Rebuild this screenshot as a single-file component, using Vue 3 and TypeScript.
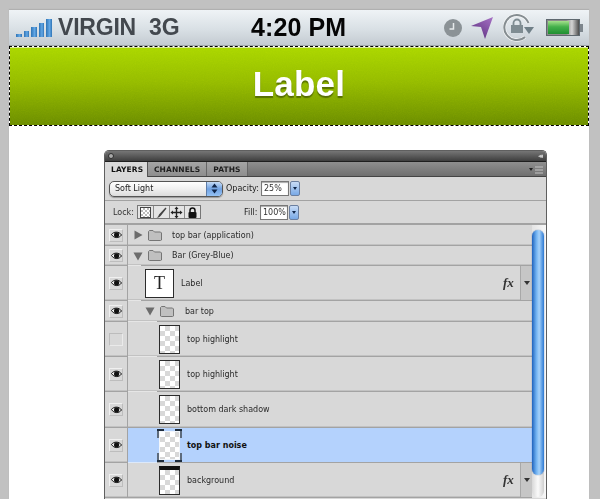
<script setup lang="ts">
interface LayerRow {
  name: string
  kind: 'group' | 'text' | 'layer' | 'fill'
  height: number
  indent?: number
  open?: boolean
  eye?: boolean
  fx?: boolean
  active?: boolean
  soft?: number
}

const rows: LayerRow[] = [
  { name: 'top bar (application)', kind: 'group', height: 21, indent: 5, eye: true },
  { name: 'Bar (Grey-Blue)', kind: 'group', height: 20, indent: 5, open: true, eye: true, soft: 13 },
  { name: 'Label', kind: 'text', height: 35, eye: true, fx: true, soft: 13 },
  { name: 'bar top', kind: 'group', height: 21, indent: 17, open: true, eye: true, soft: 29 },
  { name: 'top highlight', kind: 'layer', height: 35, soft: 29 },
  { name: 'top highlight', kind: 'layer', height: 35, eye: true, soft: 29 },
  { name: 'bottom dark shadow', kind: 'layer', height: 36, eye: true },
  { name: 'top bar noise', kind: 'layer', height: 35, eye: true, active: true, soft: 29 },
  { name: 'background', kind: 'fill', height: 35, eye: true, fx: true },
]

const signalBars = [3, 6, 10, 14, 18]
</script>

<template>
  <div class="page">
    <div class="canvas">
      <header class="status">
        <div class="signal">
          <span v-for="h in signalBars" :key="h" class="signal-bar" :style="{ height: h + 'px' }"></span>
        </div>
        <span class="carrier">VIRGIN</span>
        <span class="network">3G</span>
        <span class="time">4:20 PM</span>
        <svg class="ico-clock" width="20" height="20" viewBox="0 0 20 20">
          <circle cx="10" cy="10" r="9" fill="#8b9296" />
          <path d="M10.5 5v6H6.5" fill="none" stroke="#e6eaec" stroke-width="1.5" />
        </svg>
        <svg class="ico-arrow" width="23" height="24" viewBox="0 0 23 24">
          <defs>
            <linearGradient id="arrowFill" x1="1" y1="0" x2="0.3" y2="1">
              <stop offset="0" stop-color="#a873c6" />
              <stop offset="1" stop-color="#5f3382" />
            </linearGradient>
          </defs>
          <path d="M22 1 0 10 10 11 14 23Z" fill="url(#arrowFill)" />
        </svg>
        <svg class="ico-rotate" width="32" height="30" viewBox="0 0 32 30">
          <path d="M22 25A12.5 12.5 0 1 1 25.5 11" fill="none" stroke="#f4f6f7" stroke-width="3.4" />
          <path d="M22 25A12.5 12.5 0 1 1 25.5 11" fill="none" stroke="#858d91" stroke-width="2" />
          <path d="M21 15h10l-5 7z" fill="#6f7f87" />
          <path d="M10.5 13V11a3.5 3.5 0 0 1 7 0v2" fill="none" stroke="#7f8c92" stroke-width="1.8" />
          <rect x="8" y="13" width="12" height="8" fill="#7f8c92" />
        </svg>
        <div class="battery">
          <div class="battery-body"><span class="battery-level"></span></div>
          <span class="battery-tip"></span>
        </div>
      </header>

      <div class="green-bar">
        <svg class="noise" width="100%" height="100%">
          <filter id="barNoise">
            <feTurbulence type="fractalNoise" baseFrequency="0.9" numOctaves="2" />
            <feColorMatrix type="saturate" values="0" />
          </filter>
          <rect width="100%" height="100%" filter="url(#barNoise)" />
        </svg>
        <span class="bar-label">Label</span>
      </div>

      <section class="panel">
        <div class="title-bar">
          <span class="close-dot"></span>
          <span class="collapse">◂◂</span>
        </div>
        <div class="tabs">
          <span class="tab tab-active">LAYERS</span>
          <span class="tab">CHANNELS</span>
          <span class="tab">PATHS</span>
          <svg class="tab-menu" width="14" height="8" viewBox="0 0 14 8">
            <path d="M0 2h4L2 5z" fill="#222" />
            <path d="M6 1h8M6 4h8M6 7h8" stroke="#c4c4c4" stroke-width="1" />
          </svg>
        </div>

        <div class="options blend-row">
          <div class="select">
            <span class="select-text">Soft Light</span>
            <span class="stepper">
              <svg width="7" height="11" viewBox="0 0 7 11"><path d="M3.5 0.5 6.5 4.5H0.5ZM3.5 10.5 0.5 6.5H6.5Z" fill="#10264a" /></svg>
            </span>
          </div>
          <span class="opt-label">Opacity:</span>
          <span class="input">25%</span>
          <span class="spin"><i></i></span>
        </div>

        <div class="options lock-row">
          <span class="lock-label">Lock:</span>
          <div class="lock-buttons">
            <span class="lock-btn"><i class="lock-check"></i></span>
            <span class="lock-btn">
              <svg width="13" height="13" viewBox="0 0 13 13"><path d="M1.5 11.5C3 11 3.5 10 4 8.5L10.5 1.5 11.5 2.5 6 9.5C5 11 3.5 11.8 1.5 11.5Z" fill="#444" /></svg>
            </span>
            <span class="lock-btn">
              <svg width="13" height="13" viewBox="0 0 13 13"><path d="M6.5 0.5 8.5 3H7.2V5.8H10V4.5L12.5 6.5 10 8.5V7.2H7.2V10H8.5L6.5 12.5 4.5 10H5.8V7.2H3V8.5L0.5 6.5 3 4.5V5.8H5.8V3H4.5Z" fill="#222" /></svg>
            </span>
            <span class="lock-btn">
              <svg width="13" height="13" viewBox="0 0 13 13"><path d="M4 6V4.5a2.5 2.5 0 0 1 5 0V6" fill="none" stroke="#111" stroke-width="1.5" /><rect x="2.5" y="6" width="8" height="6" rx="1" fill="#111" /></svg>
            </span>
          </div>
          <span class="opt-label fill-label">Fill:</span>
          <span class="input">100%</span>
          <span class="spin"><i></i></span>
        </div>

        <div class="layers">
          <div class="layer-list">
            <div v-for="(row, i) in rows" :key="i" class="row" :style="{ height: row.height + 'px' }">
              <div class="eye-col">
                <span class="eye-box" :class="{ 'eye-off': !row.eye }">
                  <svg v-if="row.eye" width="11" height="8" viewBox="0 0 11 8">
                    <path d="M0.5 3.5C2.5 0.5 8 0 10.5 4 8 7.5 3 7.5 0.5 3.5Z" fill="#eee" stroke="#111" stroke-width="1" />
                    <circle cx="5.6" cy="3.8" r="2.6" fill="#111" />
                  </svg>
                </span>
              </div>
              <div class="row-main" :class="{ 'row-active': row.active }">
                <template v-if="row.kind === 'group'">
                  <span :style="{ width: row.indent + 'px' }"></span>
                  <svg class="twisty" width="10" height="10" viewBox="0 0 10 10">
                    <path v-if="row.open" d="M0.5 1.5H9.5L5 9.5Z" fill="#6c6c6c" />
                    <path v-else d="M1.5 0.5V9.5L9.5 5Z" fill="#6c6c6c" />
                  </svg>
                  <svg class="folder" width="14" height="11" viewBox="0 0 14 11">
                    <path d="M0.5 10V1.5L1.5 0.5H5L6.5 2H12.5L13.5 3V10L12.5 10.5H1.5Z" fill="#c0c0c0" stroke="#757575" stroke-width="1" />
                  </svg>
                </template>
                <div v-else-if="row.kind === 'text'" class="thumb-text">T</div>
                <div v-else class="thumb" :class="{ 'thumb-picked': row.active, 'thumb-fill': row.kind === 'fill' }"></div>
                <span class="row-name" :class="['name-' + row.kind, { 'name-sub': row.indent === 17, 'name-bold': row.active }]">{{ row.name }}</span>
                <div v-if="row.fx" class="fx">
                  <span class="fx-text">fx</span>
                  <span class="fx-arrow"></span>
                </div>
                <span v-if="row.soft" class="soft-line" :style="{ width: row.soft + 'px' }"></span>
              </div>
            </div>
          </div>
          <div class="scroller">
            <div class="scroll-thumb"></div>
            <div class="scroll-end"></div>
          </div>
        </div>
      </section>
    </div>
  </div>
</template>

<style scoped>
.page {
  width: 600px;
  height: 499px;
  overflow: hidden;
  box-sizing: border-box;
  padding: 10px 11px 0 9px;
  background: #c1c1c1;
  font-family: "Liberation Sans", Arial, sans-serif;
}

.canvas {
  height: 489px;
  overflow: hidden;
  background: #fff;
  box-shadow: 0 -1px 1px #b0b0b0;
}

/* status bar */
.status {
  display: flex;
  align-items: center;
  height: 35px;
  padding-left: 7px;
  background: linear-gradient(#eff3f6, #d9e0e5 55%, #c4cbd1);
  border-bottom: 1px solid #9ea4a8;
}

.signal {
  display: flex;
  align-items: flex-end;
  gap: 2px;
  width: 36px;
  height: 18px;
}

.signal-bar {
  width: 5.6px;
  background: linear-gradient(90deg, #2f74b5, #63a8e6 60%, #2f74b5);
}

.carrier {
  width: 91px;
  margin-left: 6px;
  font-size: 23px;
  font-weight: 700;
  color: #43484e;
  white-space: nowrap;
  letter-spacing: -0.2px;
}

.network {
  width: 102px;
  font-size: 23px;
  font-weight: 700;
  color: #43484e;
}

.time {
  width: 192px;
  font-size: 25px;
  font-weight: 700;
  color: #050505;
  white-space: nowrap;
  letter-spacing: 0.1px;
}

.ico-clock {
  margin-top: 1px;
}

.ico-arrow {
  margin-left: 8px;
}

.ico-rotate {
  margin: -1px 0 0 9px;
}

.battery {
  display: flex;
  align-items: center;
  margin-left: 11px;
}

.battery-body {
  box-sizing: border-box;
  width: 34px;
  height: 17px;
  border: 1px solid #5e686f;
  padding: 1px;
  background: linear-gradient(90deg, #8b8b8b 60%, #d4d4d4 78%, #4d4d4d);
  background-clip: padding-box;
}

.battery-level {
  display: block;
  width: 21px;
  height: 100%;
  background: linear-gradient(#a5e08c, #44b04a 45%, #1f8f32);
}

.battery-tip {
  width: 3px;
  height: 8px;
  background: #7d868d;
}

/* green title bar */
.green-bar {
  position: relative;
  display: flex;
  align-items: center;
  justify-content: center;
  height: 78px;
  overflow: hidden;
  border: 1px dashed #000;
  background:
    linear-gradient(#dbe99a 1px, #a9d600 1px, #94bb00 45%, #6a8c00) padding-box,
    #fff border-box;
}

.noise {
  position: absolute;
  inset: 0;
  opacity: 0.3;
  mix-blend-mode: soft-light;
}

.bar-label {
  position: relative;
  margin-top: -4px;
  font-size: 35px;
  font-weight: 700;
  color: #fff;
  letter-spacing: 0.2px;
  text-shadow: 0 2px 1px rgba(70, 90, 0, 0.75);
}

/* layers panel */
.panel {
  width: 443px;
  margin: 24px 0 0 95px;
  padding-bottom: 10px;
  box-sizing: border-box;
  border: 1px solid #5f5f5f;
  border-bottom: 0;
  border-radius: 5px 5px 0 0;
  background: #d8d8d8;
  font-family: "DejaVu Sans", Verdana, sans-serif;
  color: #222;
}

.title-bar {
  display: flex;
  align-items: center;
  justify-content: space-between;
  height: 10px;
  padding: 0 3px;
  background: linear-gradient(#767676, #3e3e3e);
  border-bottom: 1px solid #1f1f1f;
  border-radius: 4px 4px 0 0;
}

.close-dot {
  box-sizing: border-box;
  width: 6px;
  height: 6px;
  border: 1px solid #2d2d2d;
  border-radius: 50%;
  background: #a9a9a9;
}

.collapse {
  padding-right: 2px;
  font-size: 7px;
  line-height: 8px;
  letter-spacing: -2px;
  color: #c8c8c8;
}

.tabs {
  display: flex;
  height: 14px;
  background: linear-gradient(#8f8f8f, #6f6f6f);
  border-bottom: 1px solid #444;
}

.tab {
  display: flex;
  align-items: center;
  padding: 0 6px;
  font-size: 7.5px;
  font-weight: 700;
  letter-spacing: 0.1px;
  color: #1e1e1e;
  border-right: 1px solid #666;
  background: linear-gradient(#a5a5a5, #8e8e8e);
}

.tab-active {
  box-sizing: border-box;
  width: 43px;
  height: 15px;
  color: #111;
  background: #d9d9d9;
  border-right: 1px solid #555;
}

.tab-menu {
  margin: 4px 3px 0 auto;
}

.options {
  display: flex;
  align-items: center;
  box-sizing: border-box;
  border-bottom: 1px solid #a2a2a2;
  font-size: 8px;
}

.blend-row {
  height: 24px;
  padding-left: 4px;
}

.lock-row {
  height: 24px;
  padding-left: 8px;
  border-bottom: 2px solid #a2a2a2;
}

.select {
  display: flex;
  align-items: center;
  justify-content: space-between;
  box-sizing: border-box;
  width: 114px;
  height: 16px;
  overflow: hidden;
  border: 1px solid #555;
  border-radius: 5px;
  background: linear-gradient(#fff, #f0f0f0 50%, #dcdcdc);
  box-shadow: 0 1px 1px #999;
}

.select-text {
  padding-left: 5px;
  font-size: 8px;
}

.stepper {
  display: flex;
  align-items: center;
  justify-content: center;
  width: 15px;
  height: 100%;
  border-left: 1px solid #5d7ca8;
  background: linear-gradient(#c6dcf6, #6fa1e2 50%, #95c2f4);
}

.opt-label {
  width: 33px;
  margin-left: 3px;
  font-size: 8px;
  white-space: nowrap;
  color: #222;
}

.input {
  display: flex;
  align-items: center;
  box-sizing: border-box;
  width: 28px;
  height: 15px;
  margin-left: 2px;
  padding-left: 2px;
  border: 1px solid #777;
  box-shadow: inset 0 1px 1px #aaa;
  background: #fff;
  font-size: 8px;
  color: #333;
}

.spin {
  display: flex;
  align-items: center;
  justify-content: center;
  box-sizing: border-box;
  width: 10px;
  height: 15px;
  margin-left: 1px;
  border: 1px solid #6b7fa0;
  border-radius: 2px;
  background: linear-gradient(#c8dcf6, #79a9e6);
}

.spin i {
  width: 0;
  height: 0;
  border-left: 2px solid transparent;
  border-right: 2px solid transparent;
  border-top: 3px solid #10264a;
}

.lock-label {
  width: 24px;
  font-size: 8px;
  color: #333;
}

.lock-buttons {
  display: flex;
  box-sizing: border-box;
  width: 64px;
  height: 14px;
  border: 1px solid #777;
  background: #e4e4e4;
}

.lock-btn {
  display: flex;
  flex: 1;
  align-items: center;
  justify-content: center;
  border-right: 1px solid #8a8a8a;
}

.lock-btn:last-child {
  border-right: 0;
}

.lock-check {
  width: 9px;
  height: 9px;
  border: 1px solid #444;
  background: repeating-conic-gradient(#bbb 0 25%, #fff 0 50%) 0 0 / 4px 4px;
}

.fill-label {
  width: 14px;
  margin-left: 43px;
}

.layers {
  display: flex;
}

.layer-list {
  flex: 1;
  min-width: 0;
}

.row {
  display: flex;
  box-sizing: border-box;
  border-bottom: 1px solid #a3a3a3;
  box-shadow: inset 0 -1px 0 #c2c2c2;
}

.eye-col {
  display: flex;
  flex: none;
  align-items: center;
  justify-content: center;
  box-sizing: border-box;
  width: 23px;
  border-right: 1px solid #a3a3a3;
}

.eye-box {
  display: flex;
  align-items: center;
  justify-content: center;
  box-sizing: border-box;
  width: 14px;
  height: 13px;
  border-top: 1px solid #f0f0f0;
  border-left: 1px solid #f0f0f0;
  border-right: 1px solid #bdbdbd;
  border-bottom: 1px solid #bdbdbd;
}

.eye-off {
  border-color: #bcbcbc #eaeaea #eaeaea #bcbcbc;
}

.row-main {
  position: relative;
  display: flex;
  flex: 1;
  align-items: center;
  min-width: 0;
}

.row-active {
  background: #b4d2fd;
}

/* lighter stretch of the separator left of the indented children */
.soft-line {
  position: absolute;
  left: 0;
  bottom: -1px;
  height: 1px;
  background: #e6e6e6;
}

.row-active .soft-line {
  background: #dce9fb;
}

.twisty {
  margin-right: 5px;
}

.thumb,
.thumb-text {
  flex: none;
  box-sizing: border-box;
  border: 1px solid #2c2c2c;
  background-color: #fff;
}

.thumb {
  position: relative;
  width: 21px;
  height: 29px;
  margin-left: 31px;
  background-image: repeating-conic-gradient(#d8d8d8 0 25%, #fff 0 50%);
  background-size: 10px 10px;
}

.thumb-picked {
  border-color: #f2f6fb;
}

.thumb-picked::after {
  content: "";
  position: absolute;
  inset: -3px -3px;
  background:
    linear-gradient(#1c2a3a, #1c2a3a) 0 0 / 7px 2px no-repeat,
    linear-gradient(#1c2a3a, #1c2a3a) 100% 0 / 7px 2px no-repeat,
    linear-gradient(#1c2a3a, #1c2a3a) 0 100% / 7px 2px no-repeat,
    linear-gradient(#1c2a3a, #1c2a3a) 100% 100% / 7px 2px no-repeat,
    linear-gradient(#5d6b7c, #5d6b7c) 0 0 / 2px 9px no-repeat,
    linear-gradient(#5d6b7c, #5d6b7c) 100% 0 / 2px 9px no-repeat,
    linear-gradient(#5d6b7c, #5d6b7c) 0 100% / 2px 9px no-repeat,
    linear-gradient(#5d6b7c, #5d6b7c) 100% 100% / 2px 9px no-repeat;
}

.thumb-fill {
  border-top: 4px solid #111;
}

.thumb-text {
  display: flex;
  align-items: center;
  justify-content: center;
  width: 29px;
  height: 29px;
  margin-left: 17px;
  font-family: "Liberation Serif", serif;
  font-size: 18px;
}

.row-name {
  font-size: 8px;
  white-space: nowrap;
  color: #2a2a2a;
}

.name-group {
  margin-left: 10px;
}

.name-sub {
  margin-left: 11px;
}

.name-text,
.name-layer,
.name-fill {
  margin-left: 7px;
}

.name-bold {
  font-weight: 700;
  color: #111;
}

.fx {
  display: flex;
  align-items: center;
  align-self: stretch;
  margin-left: auto;
}

.fx-text {
  width: 17px;
  font-family: "Liberation Serif", serif;
  font-size: 13px;
  font-style: italic;
  font-weight: 700;
  color: #333;
}

.fx-arrow {
  position: relative;
  align-self: stretch;
  width: 11px;
  border-left: 1px solid #a8a8a8;
  background: #c6c6c6;
}

.fx-arrow::after {
  content: "";
  position: absolute;
  top: 50%;
  left: 3px;
  margin-top: -2px;
  border-left: 3px solid transparent;
  border-right: 3px solid transparent;
  border-top: 4px solid #333;
}

.scroller {
  flex: none;
  box-sizing: border-box;
  width: 14px;
  padding-top: 5px;
  background: linear-gradient(90deg, #e4e4e4, #f8f8f8);
}

.scroll-thumb {
  position: relative;
  z-index: 1;
  width: 12px;
  height: 245px;
  border-radius: 6px;
  background: linear-gradient(90deg, #1f63bd, #6eb0f0 35%, #a6d2fa 60%, #2b78d2);
  box-shadow: 0 0 1px #1b4a8c;
}

.scroll-end {
  width: 12px;
  height: 28px;
  margin-top: -6px;
  border-radius: 0 0 6px 6px;
  background: linear-gradient(90deg, #d8d8d8, #fafafa 50%, #cfcfcf);
}
</style>
